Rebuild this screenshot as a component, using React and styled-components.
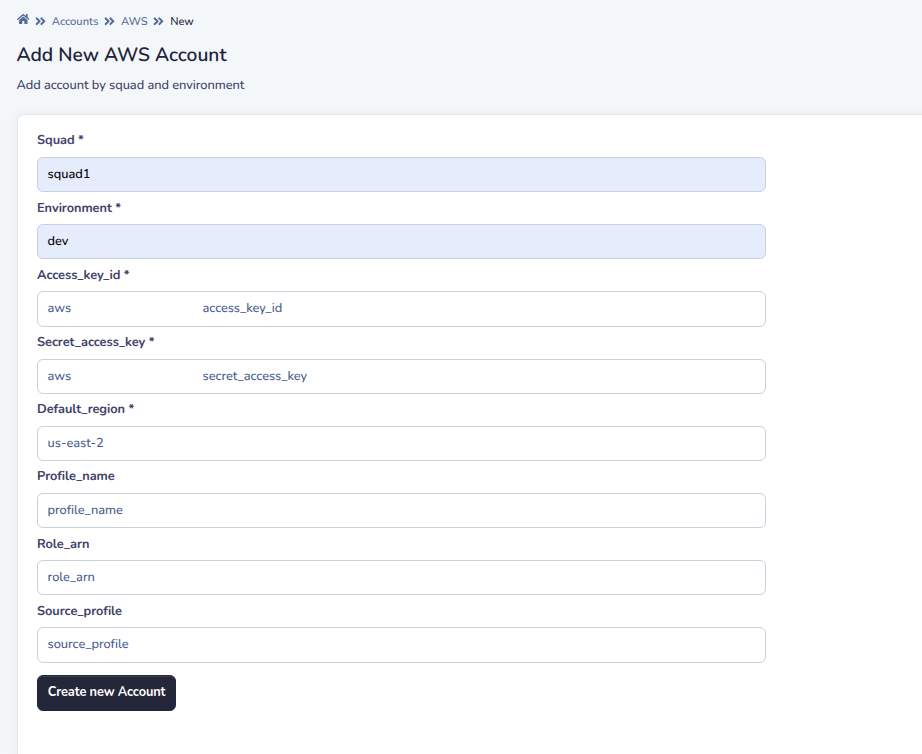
import React from 'react';
import styled, { createGlobalStyle } from 'styled-components';
import { FaHome, FaAngleDoubleRight } from 'react-icons/fa';

const GlobalStyle = createGlobalStyle`
  *, *::before, *::after { box-sizing: border-box; }
  html, body { margin: 0; height: 100%; overflow: hidden; }
  body {
    background: #f3f7fa;
    color: #42426a;
    font-family: "Nunito", Lato, sans-serif;
    font-size: 12.8px;
    text-rendering: geometricPrecision;
    -webkit-font-smoothing: antialiased;
  }
`;

const Page = styled.div`
  display: flex;
  flex-direction: column;
  height: 754px;
  padding: 11px 0 0 16.5px;
  overflow: hidden;
`;

const Breadcrumb = styled.nav`
  display: flex;
  align-items: center;
  height: 20px;
  font-size: 11.2px;
  font-weight: 500;
  color: #566a98;
`;

const HomeIcon = styled(FaHome)`
  width: 12.6px;
  height: 12px;
  margin-bottom: 4px;
`;

const Separator = styled(FaAngleDoubleRight)`
  width: 11px;
  height: 12.5px;
  margin: 1px 6px 0 5.7px;
`;

const Crumb = styled.span`
  width: ${(p) => p.$width}px;
  padding-top: 1px;
  white-space: nowrap;
  color: ${(p) => (p.$current ? '#24253a' : 'inherit')};
`;

const Title = styled.h1`
  margin: 10px 0 0;
  font-size: 19.2px;
  font-weight: 600;
  line-height: 28px;
  color: #22233b;
`;

const Subtitle = styled.p`
  margin: 6px 0 0;
  font-weight: 500;
  letter-spacing: -0.04px;
  line-height: 20px;
`;

const Card = styled.main`
  flex: 1;
  width: 940px;
  margin: 19px 0 0 0.5px;
  padding: 15px 19px 0;
  background: #fff;
  border: 1px solid #e3e8ef;
  border-bottom: 0;
  border-radius: 7px 7px 0 0;
  box-shadow: 0 2px 16px rgba(46, 54, 80, 0.055);
`;

const Form = styled.form`
  width: 729px;
`;

const Field = styled.div`
  height: 67.2px;
`;

const Label = styled.label`
  display: block;
  height: 27px;
  padding-top: 0.4px;
  font-weight: 700;
  letter-spacing: -0.06px;
  line-height: 20px;
`;

const Input = styled.div`
  display: flex;
  align-items: center;
  height: 35.2px;
  padding: 0 9.6px 1.1px;
  border: 1px solid #c9cfdd;
  border-radius: 6px;
  background: ${(p) => (p.$filled ? '#e5ecfc' : '#fff')};
  color: ${(p) => (p.$filled ? '#000' : '#4a5e8e')};
  font-weight: 500;
  letter-spacing: -0.04px;
  white-space: nowrap;
`;

const Prefix = styled.span`
  width: 155px;
`;

const SubmitButton = styled.button`
  display: block;
  width: 139px;
  height: 36px;
  margin-top: 7.4px;
  padding: 0 0 1.6px;
  border: 1px solid #24263a;
  border-radius: 6px;
  background: #24263a;
  box-shadow: inset 0 1px 0 rgba(255, 255, 255, 0.1);
  color: #fff;
  font: inherit;
  font-weight: 700;
  letter-spacing: -0.13px;
  white-space: nowrap;
`;

const fields = [
  { label: 'Squad *', text: 'squad1', filled: true },
  { label: 'Environment *', text: 'dev', filled: true },
  { label: 'Access_key_id *', prefix: 'aws', text: 'access_key_id' },
  { label: 'Secret_access_key *', prefix: 'aws', text: 'secret_access_key' },
  { label: 'Default_region *', text: 'us-east-2' },
  { label: 'Profile_name', text: 'profile_name' },
  { label: 'Role_arn', text: 'role_arn' },
  { label: 'Source_profile', text: 'source_profile' },
];

export default function App() {
  return (
    <>
      <GlobalStyle />
      <Page>
        <Breadcrumb>
          <HomeIcon />
          <Separator />
          <Crumb $width={46.5}>Accounts</Crumb>
          <Separator />
          <Crumb $width={26.5}>AWS</Crumb>
          <Separator />
          <Crumb $width={25} $current>New</Crumb>
        </Breadcrumb>
        <Title>Add New AWS Account</Title>
        <Subtitle>Add account by squad and environment</Subtitle>
        <Card>
          <Form>
            {fields.map((f) => (
              <Field key={f.label}>
                <Label>{f.label}</Label>
                <Input $filled={f.filled}>
                  {f.prefix && <Prefix>{f.prefix}</Prefix>}
                  <span>{f.text}</span>
                </Input>
              </Field>
            ))}
            <SubmitButton type="button">Create new Account</SubmitButton>
          </Form>
        </Card>
      </Page>
    </>
  );
}
